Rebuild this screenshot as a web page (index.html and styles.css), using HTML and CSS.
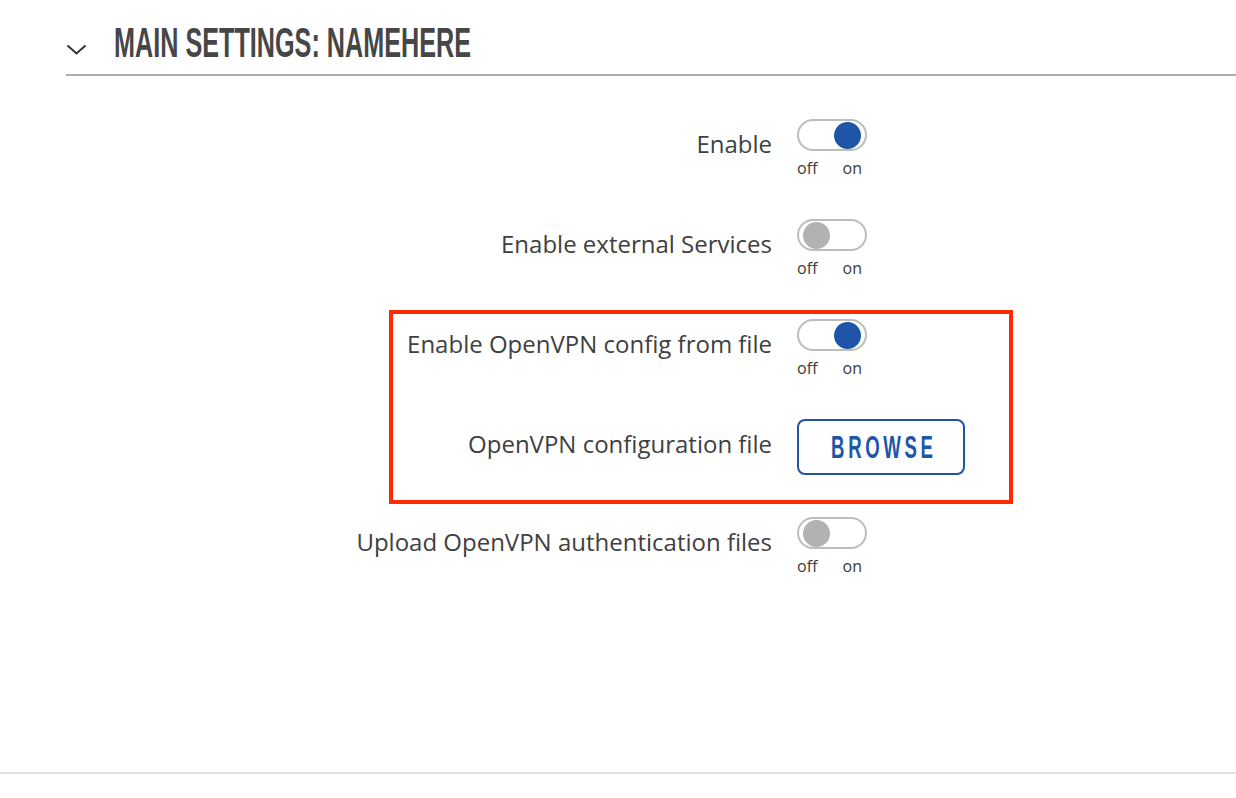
FILE: index.html
```html
<!DOCTYPE html>
<html lang="en">
<head>
    <meta charset="UTF-8">
    <meta name="viewport" content="width=device-width, initial-scale=1.0">
    <title>OpenVPN - Main settings</title>
    <link rel="stylesheet" href="styles.css">
</head>
<body>
    <header class="section-head">
        <svg class="chevron" width="22" height="11" viewBox="0 0 22 11">
            <polyline points="1.5,1.5 10.5,9.5 19.5,1.5" fill="none" stroke="#333" stroke-width="2"/>
        </svg>
        <h2><span>MAIN SETTINGS: NAMEHERE</span></h2>
    </header>

    <form class="settings">
        <div class="row">
            <label>Enable</label>
            <div class="switch on">
                <span class="track"><span class="knob"></span></span>
                <span class="states"><span>off</span><span>on</span></span>
            </div>
        </div>

        <div class="row">
            <label>Enable external Services</label>
            <div class="switch">
                <span class="track"><span class="knob"></span></span>
                <span class="states"><span>off</span><span>on</span></span>
            </div>
        </div>

        <div class="highlight">
            <div class="row">
                <label>Enable OpenVPN config from file</label>
                <div class="switch on">
                    <span class="track"><span class="knob"></span></span>
                    <span class="states"><span>off</span><span>on</span></span>
                </div>
            </div>

            <div class="row">
                <label>OpenVPN configuration file</label>
                <button type="button" class="browse"><span>BROWSE</span></button>
            </div>
        </div>

        <div class="row">
            <label>Upload OpenVPN authentication files</label>
            <div class="switch">
                <span class="track"><span class="knob"></span></span>
                <span class="states"><span>off</span><span>on</span></span>
            </div>
        </div>
    </form>

    <footer class="page-foot"></footer>
</body>
</html>
```

FILE: styles.css
```css
body {
    margin: 0;
    background: #fff;
    font-family: "Open Sans", "Liberation Sans", sans-serif;
    color: #404040;
}

/* section title */
.section-head {
    display: flex;
    align-items: flex-start;
    margin-left: 66px;
    padding: 19px 0 7px;
    border-bottom: 2px solid #adadad;
}

.chevron {
    display: block;
    margin: 25px 26px 0 0;
}

.section-head h2 {
    margin: 0;
    font-family: "Liberation Sans", Arial, sans-serif;
    font-weight: bold;
    font-size: 42px;
    line-height: 48px;
    color: #464646;
    white-space: nowrap;
}

.section-head h2 span {
    display: inline-block;
    transform: scaleX(0.6);
    transform-origin: left center;
}

/* form rows */
.settings {
    box-sizing: border-box;
    min-height: 696px;
    padding-top: 43px;
}

.row {
    display: flex;
    align-items: flex-start;
    gap: 25px;
    margin-bottom: 40px;
}

.row label {
    width: 772px;
    flex: none;
    padding-top: 8px;
    text-align: right;
    white-space: nowrap;
    font-size: 24px;
    line-height: 33px;
    color: #404040;
}

.highlight {
    width: 624px;
    box-sizing: border-box;
    margin: -9px 0 13px 389px;
    padding: 5px 0 25px 0;
    border: 4px solid #ff2a00;
}

.highlight .row label {
    width: 379px;
}

.highlight .row:last-child {
    margin-bottom: 0;
}

/* off / on switch */
.switch {
    width: 70px;
}

.track {
    display: flex;
    align-items: center;
    box-sizing: border-box;
    width: 70px;
    height: 32px;
    padding: 0 4px;
    border: 2px solid #bcbcbc;
    border-radius: 16px;
    background: #fff;
}

.knob {
    width: 27px;
    height: 27px;
    border-radius: 50%;
    background: #b2b2b2;
}

.switch.on .track {
    justify-content: flex-end;
}

.switch.on .knob {
    background: #1e55a6;
}

.states {
    display: flex;
    justify-content: space-between;
    width: 65px;
    margin-top: 6px;
    font-size: 16px;
    line-height: 22px;
    color: #3a3a3a;
}

/* file button */
.browse {
    display: flex;
    align-items: center;
    justify-content: center;
    width: 168px;
    height: 56px;
    padding: 0;
    border: 2px solid #1e55a6;
    border-radius: 8px;
    background: #fff;
    cursor: pointer;
}

.browse span {
    display: inline-block;
    font-family: "Liberation Sans", Arial, sans-serif;
    font-weight: bold;
    font-size: 31px;
    letter-spacing: 6px;
    margin: 2px -6px 0 0;
    color: #1e55a6;
    transform: scaleX(0.6);
}

.page-foot {
    height: 24px;
    border-top: 2px solid #e2e2e2;
}
```
